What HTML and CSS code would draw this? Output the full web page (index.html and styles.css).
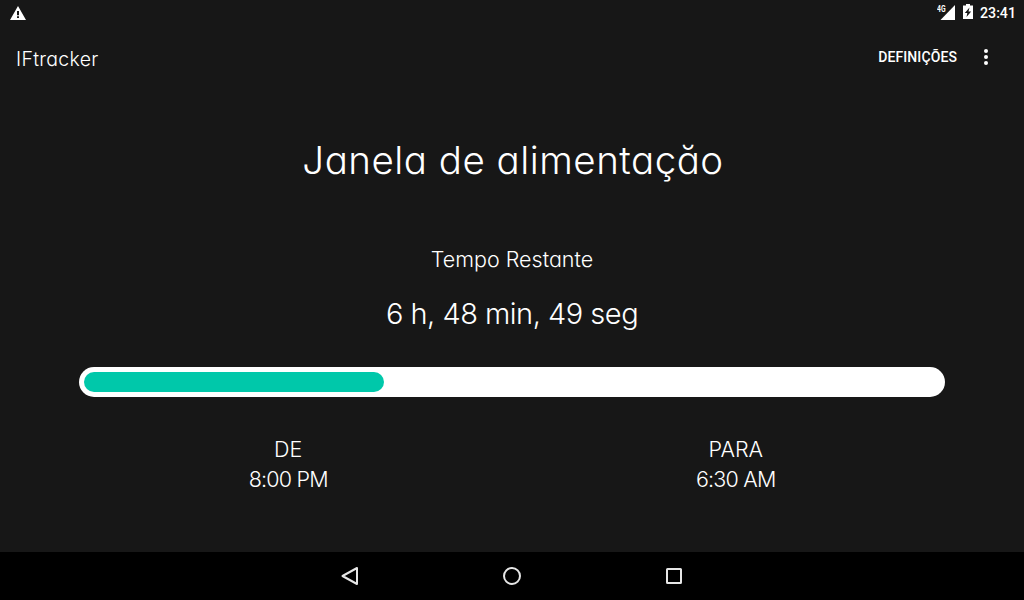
FILE: index.html
```html
<!doctype html>
<html lang="pt">
<head>
  <meta charset="utf-8">
  <title>IFtracker</title>
  <link rel="stylesheet" href="styles.css">
</head>
<body>
  <div class="status-bar">
    <svg class="warning-icon" width="16" height="14" viewBox="0 0 16 14">
      <path fill="#fff" fill-rule="evenodd" d="M8 0L16 14H0zM7 5v4.200h2V5zM7 10.200V12h2v-1.800z"/>
    </svg>
    <div class="status-icons">
      <svg width="19" height="15" viewBox="0 0 19 15">
        <path fill="#fff" d="M18 0v15H3.500z"/>
        <text class="network" x="0" y="6.500" textLength="8.500" lengthAdjust="spacingAndGlyphs">4G</text>
      </svg>
      <svg class="battery-icon" width="10" height="15" viewBox="0 0 10 15">
        <path fill="#fff" fill-rule="evenodd" d="M3 0h4v1.500h3V15H0V1.500h3zM6.500 3.500L1.800 9h2.500L3.500 13 8.200 7.500H5.500z"/>
      </svg>
      <span class="clock">23:41</span>
    </div>
  </div>
  <header class="toolbar">
    <h1 class="app-title">IFtracker</h1>
    <button class="settings-button">DEFINIÇÕES</button>
    <button class="overflow-button">
      <svg width="4" height="16" viewBox="0 0 4 16" fill="#fff"><circle cx="2" cy="2" r="2"/><circle cx="2" cy="8" r="2"/><circle cx="2" cy="14" r="2"/></svg>
    </button>
  </header>
  <main class="content">
    <h2 class="window-title">Janela de alimentaçăo</h2>
    <p class="remaining-label">Tempo Restante</p>
    <p class="remaining-time">6 h, 48 min, 49 seg</p>
    <div class="progress"><div class="progress-fill" style="width: 35.050%"></div></div>
    <div class="times">
      <div class="time time-from"><span class="time-label">DE</span><span class="time-value">8:00 PM</span></div>
      <div class="time time-to"><span class="time-label">PARA</span><span class="time-value">6:30 AM</span></div>
    </div>
  </main>
  <nav class="nav-bar">
    <svg width="18" height="20" viewBox="0 0 18 20"><path d="M16 2v16L1.500 10z"/></svg>
    <svg width="18" height="20" viewBox="0 0 18 20"><circle cx="9" cy="10" r="8"/></svg>
    <svg width="18" height="20" viewBox="0 0 18 20"><rect x="2" y="3" width="14" height="14" rx=".5"/></svg>
  </nav>
</body>
</html>
```
FILE: styles.css
```css
* {
  box-sizing: border-box;
}
body {
  margin: 0;
  height: 600px;
  display: flex;
  flex-direction: column;
  overflow: hidden;
  background: #171717;
  color: #fff;
  font-family: Inter, sans-serif;
  font-weight: 300;
  font-feature-settings: "cv11";
}
h1, h2, p {
  margin: 0;
  font-weight: 300;
}
button {
  border: 0;
  padding: 0;
  background: none;
  color: #fff;
}
.status-bar {
  height: 24px;
  padding: 0 8px 0 10px;
  display: flex;
  justify-content: space-between;
}
.warning-icon {
  margin-top: 6px;
}
.status-icons {
  display: flex;
  align-items: flex-start;
  padding-top: 5px;
}
.network {
  font: 700 8.500px Roboto, sans-serif;
  fill: #fff;
}
.battery-icon {
  margin: -1px 7px 0;
}
.clock {
  font: 500 14.200px/16px Roboto, sans-serif;
}
.toolbar {
  height: 64px;
  padding: 0 36px 0 16px;
  display: flex;
  align-items: center;
}
.app-title {
  flex: 1;
  padding-top: 6px;
  font-size: 19.5px;
  line-height: 28px;
  letter-spacing: .3px;
}
.settings-button {
  font: 500 14px/20px Roboto, sans-serif;
  letter-spacing: .1px;
  padding-top: 2px;
}
.overflow-button {
  display: flex;
  margin-left: 27px;
  padding-top: 2px;
}
.content {
  flex: 1;
  padding: 47px 79px 0;
  text-align: center;
}
.window-title {
  padding-left: 2px;
  font-size: 38.5px;
  line-height: 50px;
  letter-spacing: .5px;
}
.remaining-label {
  margin-top: 60px;
  font-size: 21.500px;
  line-height: 28px;
}
.remaining-time {
  margin-top: 22px;
  font-size: 29px;
  line-height: 38px;
  letter-spacing: -.5px;
}
.progress {
  height: 30px;
  margin-top: 34px;
  padding: 5px;
  border-radius: 15px;
  background: #fff;
}
.progress-fill {
  height: 20px;
  border-radius: 10px;
  background: #00c8aa;
}
.times {
  display: flex;
  margin-top: 37px;
}
.time {
  flex: 1;
  display: flex;
  flex-direction: column;
  font-size: 21.500px;
  line-height: 30px;
}
.time-value {
  letter-spacing: -.8px;
}
.time-from {
  padding-right: 14px;
}
.time-to {
  padding-left: 15px;
}
.nav-bar {
  height: 48px;
  display: flex;
  justify-content: center;
  align-items: center;
  gap: 144px;
  background: #000;
}
.nav-bar svg {
  fill: none;
  stroke: #e6e6e6;
  stroke-width: 2;
  stroke-linejoin: round;
}
```
